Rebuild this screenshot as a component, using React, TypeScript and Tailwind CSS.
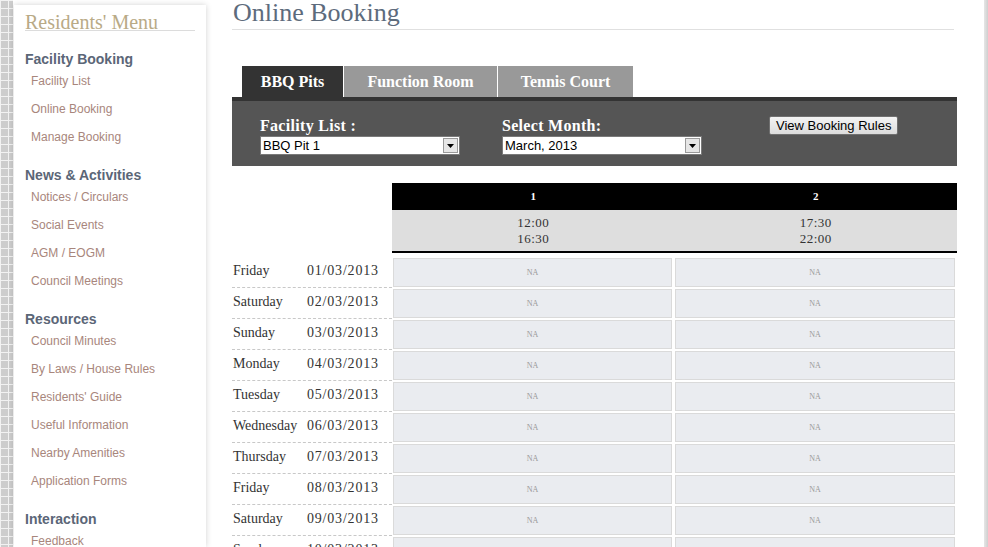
const serif = "font-['Georgia','Liberation_Serif',serif]";
const sans = "font-['Liberation_Sans',Arial,sans-serif]";

const menu = [
  { title: "Facility Booking", links: ["Facility List", "Online Booking", "Manage Booking"] },
  { title: "News & Activities", links: ["Notices / Circulars", "Social Events", "AGM / EOGM", "Council Meetings"] },
  {
    title: "Resources",
    links: ["Council Minutes", "By Laws / House Rules", "Residents' Guide", "Useful Information", "Nearby Amenities", "Application Forms"],
  },
  { title: "Interaction", links: ["Feedback"] },
];

const days = [
  ["Friday", "01/03/2013"],
  ["Saturday", "02/03/2013"],
  ["Sunday", "03/03/2013"],
  ["Monday", "04/03/2013"],
  ["Tuesday", "05/03/2013"],
  ["Wednesday", "06/03/2013"],
  ["Thursday", "07/03/2013"],
  ["Friday", "08/03/2013"],
  ["Saturday", "09/03/2013"],
  ["Sunday", "10/03/2013"],
];

function Select({ value, width }: { value: string; width: string }) {
  return (
    <div className={`flex h-[19px] ${width} items-stretch border border-[#7a7a7a] bg-white`}>
      <span className={`flex-1 pl-[2px] text-[13px] leading-[17px] text-black ${sans}`}>{value}</span>
      <span className="m-[1px] flex w-[15px] items-center justify-center border border-[#9a9a9a] bg-[#e6e6e6]">
        <svg width="7" height="4" viewBox="0 0 7 4">
          <path d="M0 0h7L3.5 4z" fill="#000" />
        </svg>
      </span>
    </div>
  );
}

function Sidebar() {
  return (
    <div className="mt-[5px] w-[192px] shrink-0 bg-white pl-[11px] pr-[11px] shadow-[0_0_6px_rgba(0,0,0,0.18)]">
      <div className={`border-b border-[#dcdcdc] pt-[9px] text-[20px] leading-[16px] text-[#b9aa86] ${serif}`}>
        Residents' Menu
      </div>
      <div className={`pt-[18px] ${sans}`}>
        {menu.map((s) => (
          <div key={s.title} className="mb-[11px]">
            <div className="text-[14px] font-bold leading-[21px] text-[#5b6677]">{s.title}</div>
            {s.links.map((l) => (
              <div key={l} className="h-[28px] pl-[6px] pt-[3px] text-[12px] leading-[16px] text-[#a8867c]">
                {l}
              </div>
            ))}
          </div>
        ))}
      </div>
    </div>
  );
}

function NaCell() {
  return (
    <div className="flex h-[31px] items-stretch py-[1px] pl-[1px] pr-[2px]">
      <div className={`flex flex-1 items-center justify-center border border-[#dadada] bg-[#eaecf0] text-[8px] text-[#9a9a9a] ${serif}`}>
        NA
      </div>
    </div>
  );
}

export default function App() {
  return (
    <div className="flex h-[547px] w-[988px] overflow-hidden bg-white">
      <div className="w-[13px] shrink-0 bg-[#cdcdcd] bg-[linear-gradient(#f2f2f2_1px,transparent_1px),linear-gradient(90deg,#f2f2f2_1px,transparent_1px)] bg-[length:8px_8px]" />
      <div className="w-[1px] shrink-0" />
      <Sidebar />
      <div className="ml-[26px] w-[725px] shrink-0">
        <div className={`mr-[3px] h-[30px] border-b border-[#e0e0e0] pl-[1px] text-[26px] leading-[26px] text-[#5d6b7c] ${serif}`}>
          Online Booking
        </div>

        <div className={`mt-[36px] flex h-[31px] pl-[10px] ${serif}`}>
          <div className="flex w-[101px] items-center justify-center bg-[#333333] text-[16px] font-bold text-white">BBQ Pits</div>
          <div className="ml-[1px] flex w-[153px] items-center justify-center bg-[#999999] text-[16px] font-bold text-white">
            Function Room
          </div>
          <div className="ml-[1px] flex w-[135px] items-center justify-center bg-[#999999] text-[16px] font-bold text-white">
            Tennis Court
          </div>
        </div>

        <div className="h-[69px] border-t-4 border-[#333333] bg-[#555555]">
          <div className="flex pl-[28px] pt-[14px]">
            <div className="w-[242px]">
              <div className={`text-[16px] font-bold leading-[21px] tracking-[0.3px] text-white ${serif}`}>Facility List :</div>
              <Select value="BBQ Pit 1" width="w-[200px]" />
            </div>
            <div className="w-[267px]">
              <div className={`text-[16px] font-bold leading-[21px] tracking-[0.3px] text-white ${serif}`}>Select Month:</div>
              <Select value="March, 2013" width="w-[200px]" />
            </div>
            <div className="mt-[1px] flex items-start">
              <button
                className={`h-[19px] rounded-[2px] border border-[#707070] bg-[linear-gradient(#f4f4f4,#dcdcdc)] px-[6px] text-[13px] leading-[15px] text-black ${sans}`}
              >
                View Booking Rules
              </button>
            </div>
          </div>
        </div>

        <div className={`mt-[17px] grid grid-cols-[160px_282px_283px] ${serif}`}>
          <div />
          <div className="col-span-2 grid h-[27px] grid-cols-2 bg-black text-[11px] font-bold text-white">
            <div className="flex items-center justify-center">1</div>
            <div className="flex items-center justify-center">2</div>
          </div>
          <div />
          <div className="col-span-2 grid h-[43px] grid-cols-2 border-b-2 border-black bg-[#dedede] text-[13px] leading-[16px] tracking-[0.5px] text-[#333]">
            <div className="flex flex-col items-center justify-center">
              <span>12:00</span>
              <span>16:30</span>
            </div>
            <div className="flex flex-col items-center justify-center">
              <span>17:30</span>
              <span>22:00</span>
            </div>
          </div>
          <div className="col-span-3 h-[4px]" />
          {days.map(([d, dt], i) => (
            <div key={i} className="contents">
              <div className="flex h-[31px] items-center border-b border-dashed border-[#c8c8c8] pb-[3px] pl-[1px] pr-[2px] text-[14px] text-[#333]">
                <span className="w-[74px]">{d}</span>
                <span className="tracking-[0.8px]">{dt}</span>
              </div>
              <NaCell />
              <NaCell />
            </div>
          ))}
        </div>
      </div>
      <div className="ml-auto w-[4px] shrink-0 bg-[linear-gradient(90deg,#e6e6e6,#cfcfcf)]" />
    </div>
  );
}
